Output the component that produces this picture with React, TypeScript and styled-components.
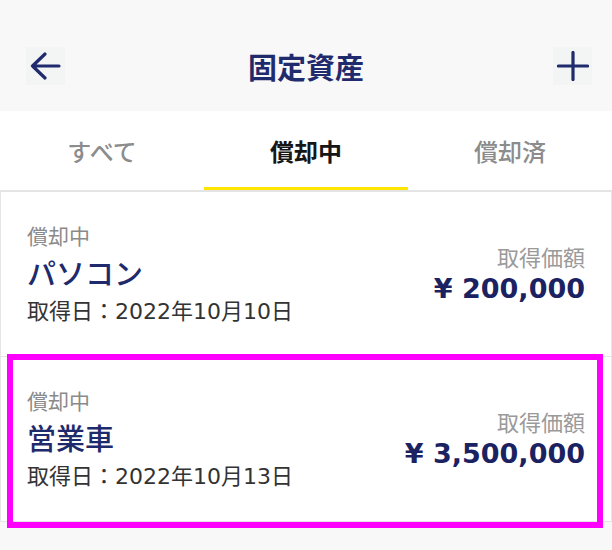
import React from "react";
import styled, { createGlobalStyle, css } from "styled-components";

const GlobalStyle = createGlobalStyle`
  html, body {
    margin: 0;
    padding: 0;
    background: #f8f8f8;
  }
  body {
    font-family: "Noto Sans CJK JP", "Noto Sans", sans-serif;
    -webkit-font-smoothing: antialiased;
  }
  * { box-sizing: border-box; }
`;

const Page = styled.div`
  width: 612px;
  min-height: 550px;
  background: #f8f8f8;
`;

const Header = styled.header`
  display: grid;
  grid-template-columns: 1fr auto 1fr;
  align-items: center;
  height: 111px;
  padding: 47px 20px 26px 26px;
  background: #f8f8f8;
`;

const IconButton = styled.button<{ $side: "left" | "right" }>`
  width: 39px;
  height: 38px;
  border: none;
  padding: 0;
  background: #f3f4f4;
  display: flex;
  align-items: center;
  justify-content: center;
  justify-self: ${(p) => (p.$side === "left" ? "start" : "end")};
  cursor: pointer;
`;

const Title = styled.h1`
  margin: 0;
  padding-right: 6px;
  font-size: 29px;
  line-height: 38px;
  font-weight: 700;
  color: #1f2b6d;
  letter-spacing: 0;
`;

const Tabs = styled.nav`
  display: grid;
  grid-template-columns: repeat(3, 1fr);
  background: #ffffff;
  border-bottom: 2px solid #e4e4e4;
`;

const Tab = styled.div<{ $active?: boolean }>`
  position: relative;
  height: 79px;
  display: flex;
  align-items: center;
  justify-content: center;
  font-size: 24px;
  font-weight: ${(p) => (p.$active ? 700 : 500)};
  color: ${(p) => (p.$active ? "#161616" : "#8c8c8c")};
  ${(p) =>
    p.$active &&
    css`
      &::after {
        content: "";
        position: absolute;
        left: 0;
        right: 0;
        bottom: 0;
        height: 3px;
        background: #ffe600;
      }
    `}
`;

const List = styled.div`
  border-left: 1px solid #e6e6e6;
  border-right: 1px solid #e6e6e6;
`;

const Card = styled.div<{ $highlighted?: boolean }>`
  position: relative;
  display: flex;
  align-items: center;
  justify-content: space-between;
  height: 165px;
  padding: 0 26px 0 26px;
  background: #ffffff;
  border-bottom: 1px solid #e6e6e6;
  ${(p) =>
    p.$highlighted &&
    css`
      &::after {
        content: "";
        position: absolute;
        left: 6px;
        right: 8px;
        top: -3px;
        bottom: -7px;
        border: 6px solid #ff00ff;
        pointer-events: none;
      }
    `}
`;

const Info = styled.div`
  display: flex;
  flex-direction: column;
  margin-top: 1px;
`;

const Status = styled.div`
  font-size: 21px;
  line-height: 30px;
  color: #8a8a8a;
`;

const Name = styled.div`
  font-size: 29px;
  line-height: 44px;
  font-weight: 500;
  color: #1e2a6c;
`;

const DateText = styled.div`
  font-family: "DejaVu Sans", "Noto Sans CJK JP", sans-serif;
  font-size: 22px;
  line-height: 36px;
  color: #333333;
`;

const PriceBlock = styled.div`
  display: flex;
  flex-direction: column;
  align-items: flex-end;
`;

const PriceLabel = styled.div`
  font-size: 22px;
  line-height: 30px;
  color: #9a9a9a;
`;

const Price = styled.div`
  font-family: "DejaVu Sans", "Noto Sans CJK JP", sans-serif;
  font-size: 27px;
  line-height: 36px;
  font-weight: 700;
  color: #1b2262;
`;

const BackIcon = () => (
  <svg width="31" height="28" viewBox="0 0 31 28" fill="none">
    <path
      d="M2.5 14H29M15 2L2.5 14L15 26"
      stroke="#1f2b6d"
      strokeWidth="3.2"
      strokeLinecap="round"
      strokeLinejoin="round"
    />
  </svg>
);

const PlusIcon = () => (
  <svg width="32" height="30" viewBox="0 0 32 30" fill="none">
    <path
      d="M1.5 15H30.5M16 1.5V28.5"
      stroke="#1f2b6d"
      strokeWidth="3.2"
      strokeLinecap="round"
    />
  </svg>
);

type Asset = {
  status: string;
  name: string;
  date: string;
  price: string;
  highlighted?: boolean;
};

const assets: Asset[] = [
  { status: "償却中", name: "パソコン", date: "取得日：2022年10月10日", price: "¥ 200,000" },
  {
    status: "償却中",
    name: "営業車",
    date: "取得日：2022年10月13日",
    price: "¥ 3,500,000",
    highlighted: true,
  },
];

export default function App() {
  return (
    <Page>
      <GlobalStyle />
      <Header>
        <IconButton $side="left" aria-label="戻る">
          <BackIcon />
        </IconButton>
        <Title>固定資産</Title>
        <IconButton $side="right" aria-label="追加">
          <PlusIcon />
        </IconButton>
      </Header>
      <Tabs>
        <Tab>すべて</Tab>
        <Tab $active>償却中</Tab>
        <Tab>償却済</Tab>
      </Tabs>
      <List>
        {assets.map((a) => (
          <Card key={a.name} $highlighted={a.highlighted}>
            <Info>
              <Status>{a.status}</Status>
              <Name>{a.name}</Name>
              <DateText>{a.date}</DateText>
            </Info>
            <PriceBlock>
              <PriceLabel>取得価額</PriceLabel>
              <Price>{a.price}</Price>
            </PriceBlock>
          </Card>
        ))}
      </List>
    </Page>
  );
}
